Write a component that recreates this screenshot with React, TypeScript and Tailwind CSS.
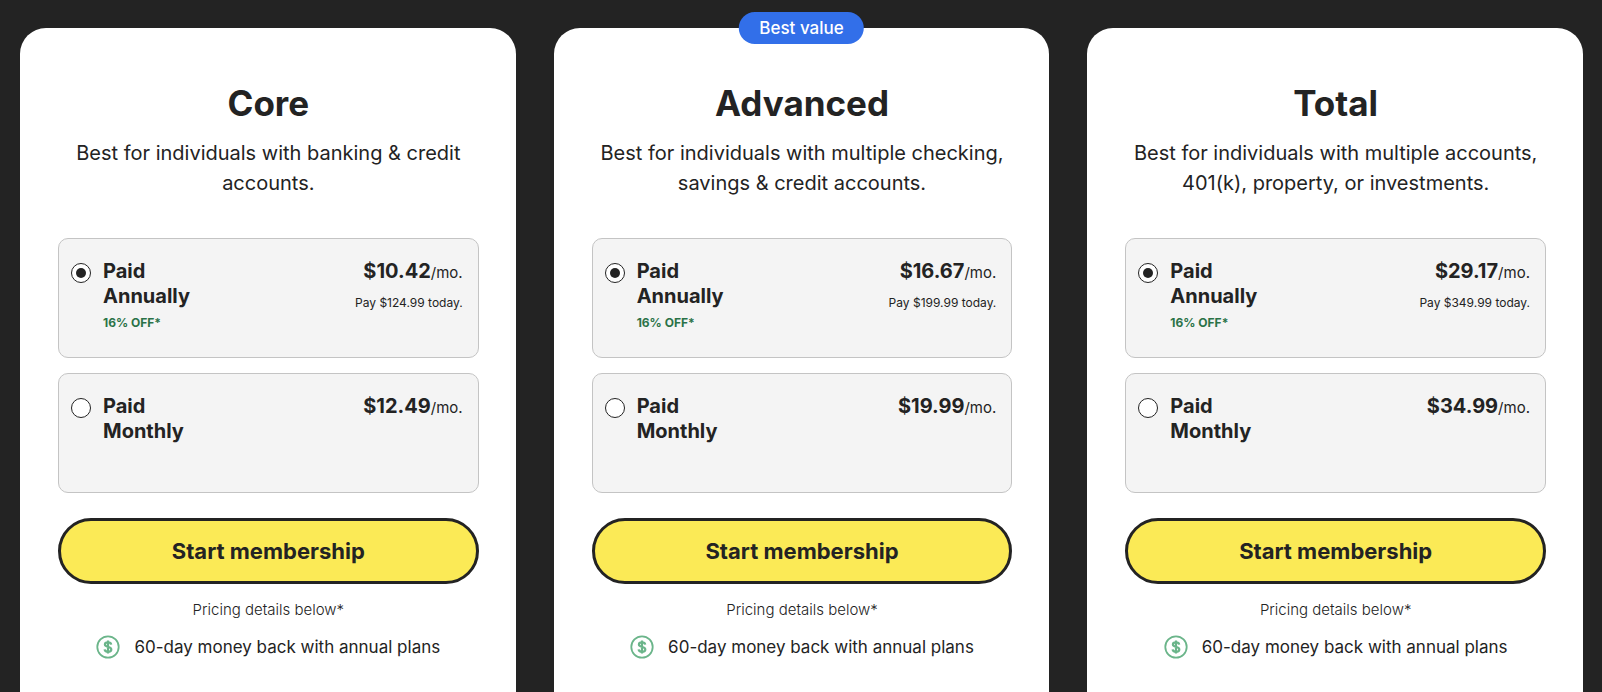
import React from "react";

type Plan = {
  id: string;
  name: string;
  description: string;
  annual: string;
  today: string;
  monthly: string;
  badge?: string;
};

const plans: Plan[] = [
  {
    id: "core",
    name: "Core",
    description: "Best for individuals with banking & credit accounts.",
    annual: "$10.42",
    today: "$124.99",
    monthly: "$12.49",
  },
  {
    id: "advanced",
    name: "Advanced",
    description: "Best for individuals with multiple checking, savings & credit accounts.",
    annual: "$16.67",
    today: "$199.99",
    monthly: "$19.99",
    badge: "Best value",
  },
  {
    id: "total",
    name: "Total",
    description: "Best for individuals with multiple accounts, 401(k), property, or investments.",
    annual: "$29.17",
    today: "$349.99",
    monthly: "$34.99",
  },
];

type OptionProps = {
  group: string;
  value: string;
  period: string;
  price: string;
  discount?: string;
  note?: string;
  defaultChecked?: boolean;
};

function BillingOption({ group, value, period, price, discount, note, defaultChecked }: OptionProps) {
  return (
    <label className="flex min-h-[120px] cursor-pointer items-start rounded-[10px] border border-[#c4c4c4] bg-[#f4f4f4] pt-5 pr-[15px] pb-5 pl-3">
      <input
        type="radio"
        name={group}
        value={value}
        defaultChecked={defaultChecked}
        className="mt-1 grid size-5 shrink-0 appearance-none place-content-center rounded-full border border-[#232323] bg-white before:size-[10px] before:rounded-full before:bg-transparent checked:before:bg-[#232323]"
      />
      <span className="ml-3 flex flex-col text-xl leading-[25px] font-bold">
        <span>Paid</span>
        <span>{period}</span>
        {discount && <span className="text-xs leading-7 font-bold text-[#2a7247]">{discount}</span>}
      </span>
      <span className="ml-auto flex flex-col items-end">
        <span className="text-[15px] leading-[25px]">
          <span className="text-xl leading-[25px] font-bold">{price}</span>/mo.
        </span>
        {note && <span className="mt-1 text-xs leading-7">{note}</span>}
      </span>
    </label>
  );
}

function MoneyBackIcon() {
  return (
    <svg viewBox="0 0 24 24" className="size-6 shrink-0" fill="none" stroke="#6bb58a" aria-hidden="true">
      <circle cx="12" cy="12" r="10.7" strokeWidth="1.8" />
      <path
        d="M15.2 9.6C15 8.2 13.8 7.4 12 7.4c-1.8 0-3.1.8-3.1 2.2 0 3.3 6.4 1.4 6.4 4.8 0 1.4-1.4 2.3-3.3 2.3s-3.2-.9-3.4-2.4M12 5.4v13.2"
        strokeWidth="2.2"
      />
    </svg>
  );
}

function PlanCard({ plan }: { plan: Plan }) {
  return (
    <section
      aria-labelledby={`${plan.id}-name`}
      className="relative flex flex-col rounded-t-[26px] bg-white pt-[51px] pr-[37px] pb-8 pl-[38px] text-center"
    >
      {plan.badge && (
        <span className="absolute top-0 left-1/2 -translate-x-1/2 -translate-y-1/2 rounded-full bg-[#326fe9] px-5 text-[17px] leading-8 font-medium whitespace-nowrap text-white">
          {plan.badge}
        </span>
      )}
      <h2 id={`${plan.id}-name`} className="text-[35px] leading-[48px] font-bold">
        {plan.name}
      </h2>
      <p className="mt-[11px] px-2 text-xl leading-[30px]">{plan.description}</p>
      <fieldset aria-label={`${plan.name} billing period`} className="mt-10 flex flex-col gap-[15px] text-left">
        <BillingOption
          group={plan.id}
          value="annual"
          period="Annually"
          price={plan.annual}
          discount="16% OFF*"
          note={`Pay ${plan.today} today.`}
          defaultChecked
        />
        <BillingOption group={plan.id} value="monthly" period="Monthly" price={plan.monthly} />
      </fieldset>
      <button
        type="button"
        className="mt-[25px] h-[66px] cursor-pointer rounded-full border-3 border-[#232323] bg-[#fbea56] text-[22px] font-bold"
      >
        Start membership
      </button>
      <p className="mt-3.5 text-[15px] leading-6 font-light">Pricing details below*</p>
      <p className="mt-3 flex items-center justify-center gap-3.5 text-[17px] leading-[26px]">
        <MoneyBackIcon />
        60-day money back with annual plans
      </p>
    </section>
  );
}

export default function App() {
  return (
    <main className="grid min-h-screen grid-cols-3 gap-[38px] bg-[#232323] pt-7 pr-[19px] pl-5 font-['Inter',sans-serif] text-[#232323]">
      {plans.map((plan) => (
        <PlanCard key={plan.id} plan={plan} />
      ))}
    </main>
  );
}
